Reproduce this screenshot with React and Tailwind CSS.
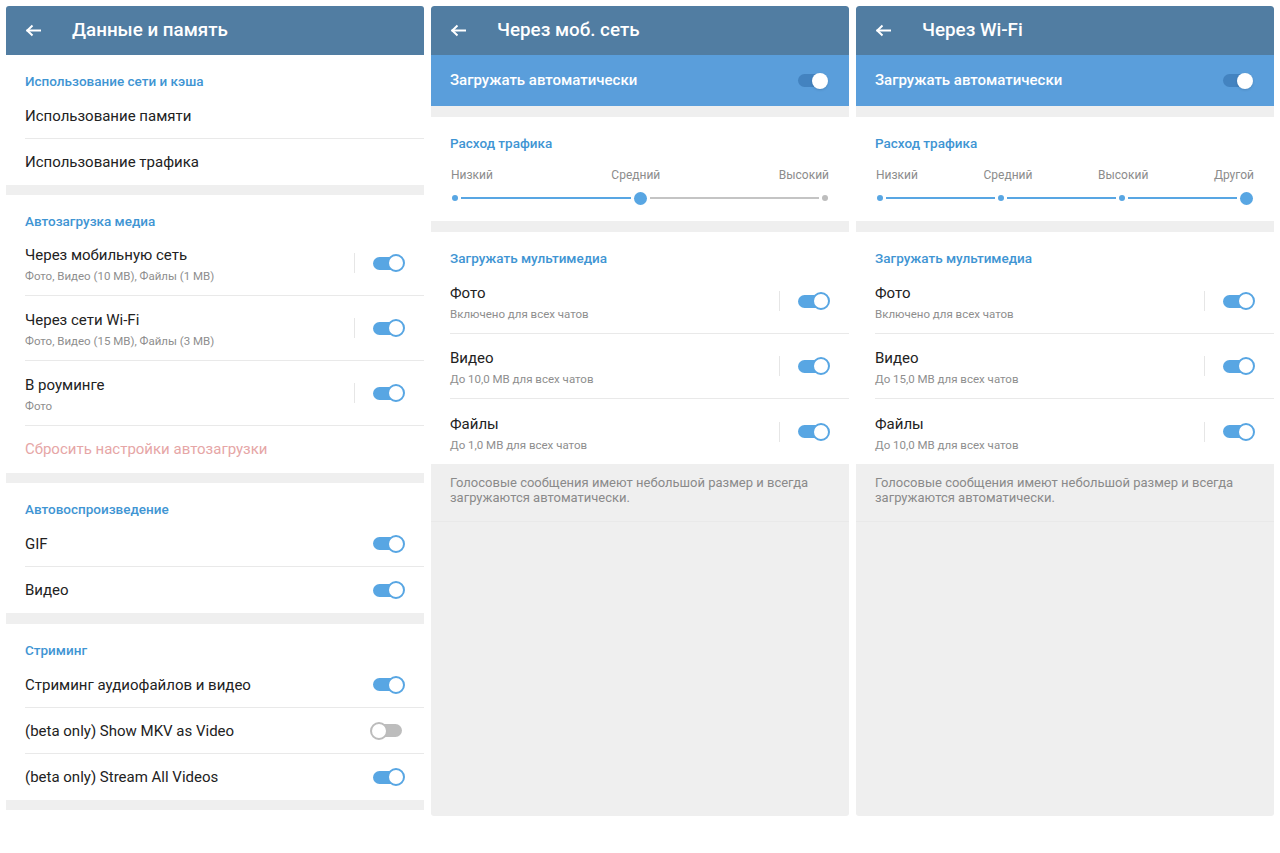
import React from 'react'

const BLUE = 'text-[#3f95d3]'

function BackArrow() {
  return (
    <svg width="16" height="13" viewBox="0 0 16 13" fill="none" stroke="white" strokeWidth="2" strokeLinecap="square">
      <path d="M15 6.5H2.5" />
      <path d="M7.5 1.5L2.3 6.5L7.5 11.5" strokeLinecap="butt" />
    </svg>
  )
}

function Header({ title }) {
  return (
    <div className="h-[49px] shrink-0 bg-[#517da2] flex items-center pl-[19px] rounded-t-[3px]">
      <BackArrow />
      <span className="ml-[31px] text-white text-[18.8px] font-medium leading-none">{title}</span>
    </div>
  )
}

function Toggle({ on = true }) {
  if (!on) {
    return (
      <div className="flex items-center mr-[3px]">
        <div className="relative z-10 w-[18px] h-[18px] rounded-full border-2 border-[#bcbcbc] bg-white" />
        <div className="-ml-[13px] w-[27px] h-[13px] rounded-full bg-[#bdbdbd]" />
      </div>
    )
  }
  return (
    <div className="flex items-center">
      <div className="w-[27px] h-[13px] rounded-full bg-[#58a6e3]" />
      <div className="-ml-[13px] w-[18px] h-[18px] rounded-full border-2 border-[#58a6e3] bg-white" />
    </div>
  )
}

function Section({ title, h = 'h-[38px]' }) {
  return (
    <div className={`${h} pt-[18px] pl-[19px] text-[13.5px] font-medium leading-[16px] ${BLUE}`}>{title}</div>
  )
}

function Gap({ h = 'h-[10px]' }) {
  return <div className={`${h} bg-[#efefef] shrink-0`} />
}

function Row({ title, last, toggle, on = true }) {
  return (
    <div className={`h-[46px] flex items-center pr-[19px] ${last ? '' : 'border-b border-[#e9e9e9]'}`}>
      <span className="flex-1 text-[15px] leading-[18px] text-[#222]">{title}</span>
      {toggle && <Toggle on={on} />}
    </div>
  )
}

function SubRow({ title, sub, last }) {
  return (
    <div className={`h-[65px] flex items-center pr-[19px] ${last ? '' : 'border-b border-[#e9e9e9]'}`}>
      <div className="flex-1 flex flex-col pt-[3px]">
        <span className="text-[15px] leading-[19px] text-[#222]">{title}</span>
        <span className="mt-[4px] text-[11.5px] leading-[14px] text-[#8e8e8e]">{sub}</span>
      </div>
      <div className="w-px h-[20px] bg-[#e6e6e6] mr-[18px]" />
      <Toggle />
    </div>
  )
}

function Dot({ big, gray }) {
  const c = gray ? 'bg-[#bdbdbd]' : 'bg-[#58a6e3]'
  return <div className={`${big ? 'w-[13px] h-[13px]' : 'w-[6px] h-[6px]'} rounded-full shrink-0 ${c}`} />
}

function Line({ gray }) {
  return <div className={`flex-1 h-[2px] mx-[3px] ${gray ? 'bg-[#c4c4c4]' : 'bg-[#58a6e3]'}`} />
}

function Traffic({ labels, children }) {
  return (
    <div className="pt-[18px] pb-[16px]">
      <div className={`pl-[19px] text-[13.5px] font-medium leading-[16px] ${BLUE}`}>Расход трафика</div>
      <div className="mt-[17px] px-[20px] flex justify-between text-[12px] leading-[14px] text-[#8c8c8c]">
        {labels.map(l => <span key={l}>{l}</span>)}
      </div>
      <div className="mt-[9px] h-[14px] px-[21px] flex items-center">{children}</div>
    </div>
  )
}

function DataPanel() {
  return (
    <div className="flex-1 flex flex-col bg-white">
      <Header title="Данные и память" />
      <Section title="Использование сети и кэша" />
      <div className="pl-[19px]">
        <Row title="Использование памяти" />
        <Row title="Использование трафика" last />
      </div>
      <Gap />
      <Section title="Автозагрузка медиа" h="h-[36px]" />
      <div className="pl-[19px]">
        <SubRow title="Через мобильную сеть" sub="Фото, Видео (10 MB), Файлы (1 MB)" />
        <SubRow title="Через сети Wi-Fi" sub="Фото, Видео (15 MB), Файлы (3 MB)" />
        <SubRow title="В роуминге" sub="Фото" />
        <div className="h-[47px] flex items-center text-[15px] text-[#e6a6a6]">Сбросить настройки автозагрузки</div>
      </div>
      <Gap />
      <Section title="Автовоспроизведение" />
      <div className="pl-[19px]">
        <Row title="GIF" toggle />
        <Row title="Видео" toggle last />
      </div>
      <Gap h="h-[11px]" />
      <Section title="Стриминг" />
      <div className="pl-[19px]">
        <Row title="Стриминг аудиофайлов и видео" toggle />
        <Row title="(beta only) Show MKV as Video" toggle on={false} />
        <Row title="(beta only) Stream All Videos" toggle last />
      </div>
      <Gap />
    </div>
  )
}

function AutoPanel({ title, labels, slider, subs }) {
  return (
    <div className="flex-1 h-[810px] flex flex-col bg-[#efefef] rounded-[3px] overflow-hidden">
      <Header title={title} />
      <div className="h-[51px] shrink-0 bg-[#5a9edb] flex items-center pl-[19px] pr-[21px]">
        <span className="flex-1 text-white text-[15px] font-medium">Загружать автоматически</span>
        <div className="flex items-center">
          <div className="w-[24px] h-[13px] rounded-full bg-[#4383c0]" />
          <div className="-ml-[10px] w-[16px] h-[16px] rounded-full bg-white shadow-sm" />
        </div>
      </div>
      <Gap h="h-[11px]" />
      <div className="bg-white">
        <Traffic labels={labels}>{slider}</Traffic>
      </div>
      <Gap h="h-[11px]" />
      <div className="bg-white">
        <Section title="Загружать мультимедиа" h="h-[37px]" />
        <div className="pl-[19px]">
          <SubRow title="Фото" sub="Включено для всех чатов" />
          <SubRow title="Видео" sub={subs[0]} />
          <SubRow title="Файлы" sub={subs[1]} last />
        </div>
      </div>
      <div className="pt-[11px] pb-[16px] px-[19px] text-[13px] leading-[15px] text-[#8a8a8a] border-b border-[#e9e9e9]">
        Голосовые сообщения имеют небольшой размер и всегда загружаются автоматически.
      </div>
    </div>
  )
}

export default function App() {
  return (
    <div className="w-[1280px] h-[853px] bg-white flex items-start gap-[7px] px-[6px] pt-[6px] font-['Roboto',sans-serif]">
      <DataPanel />
      <AutoPanel
        title="Через моб. сеть"
        labels={['Низкий', 'Средний', 'Высокий']}
        subs={['До 10,0 MB для всех чатов', 'До 1,0 MB для всех чатов']}
        slider={<>
          <Dot /><Line /><Dot big /><Line gray /><Dot gray />
        </>}
      />
      <AutoPanel
        title="Через Wi-Fi"
        labels={['Низкий', 'Средний', 'Высокий', 'Другой']}
        subs={['До 15,0 MB для всех чатов', 'До 10,0 MB для всех чатов']}
        slider={<>
          <Dot /><Line /><Dot /><Line /><Dot /><Line /><Dot big />
        </>}
      />
    </div>
  )
}
